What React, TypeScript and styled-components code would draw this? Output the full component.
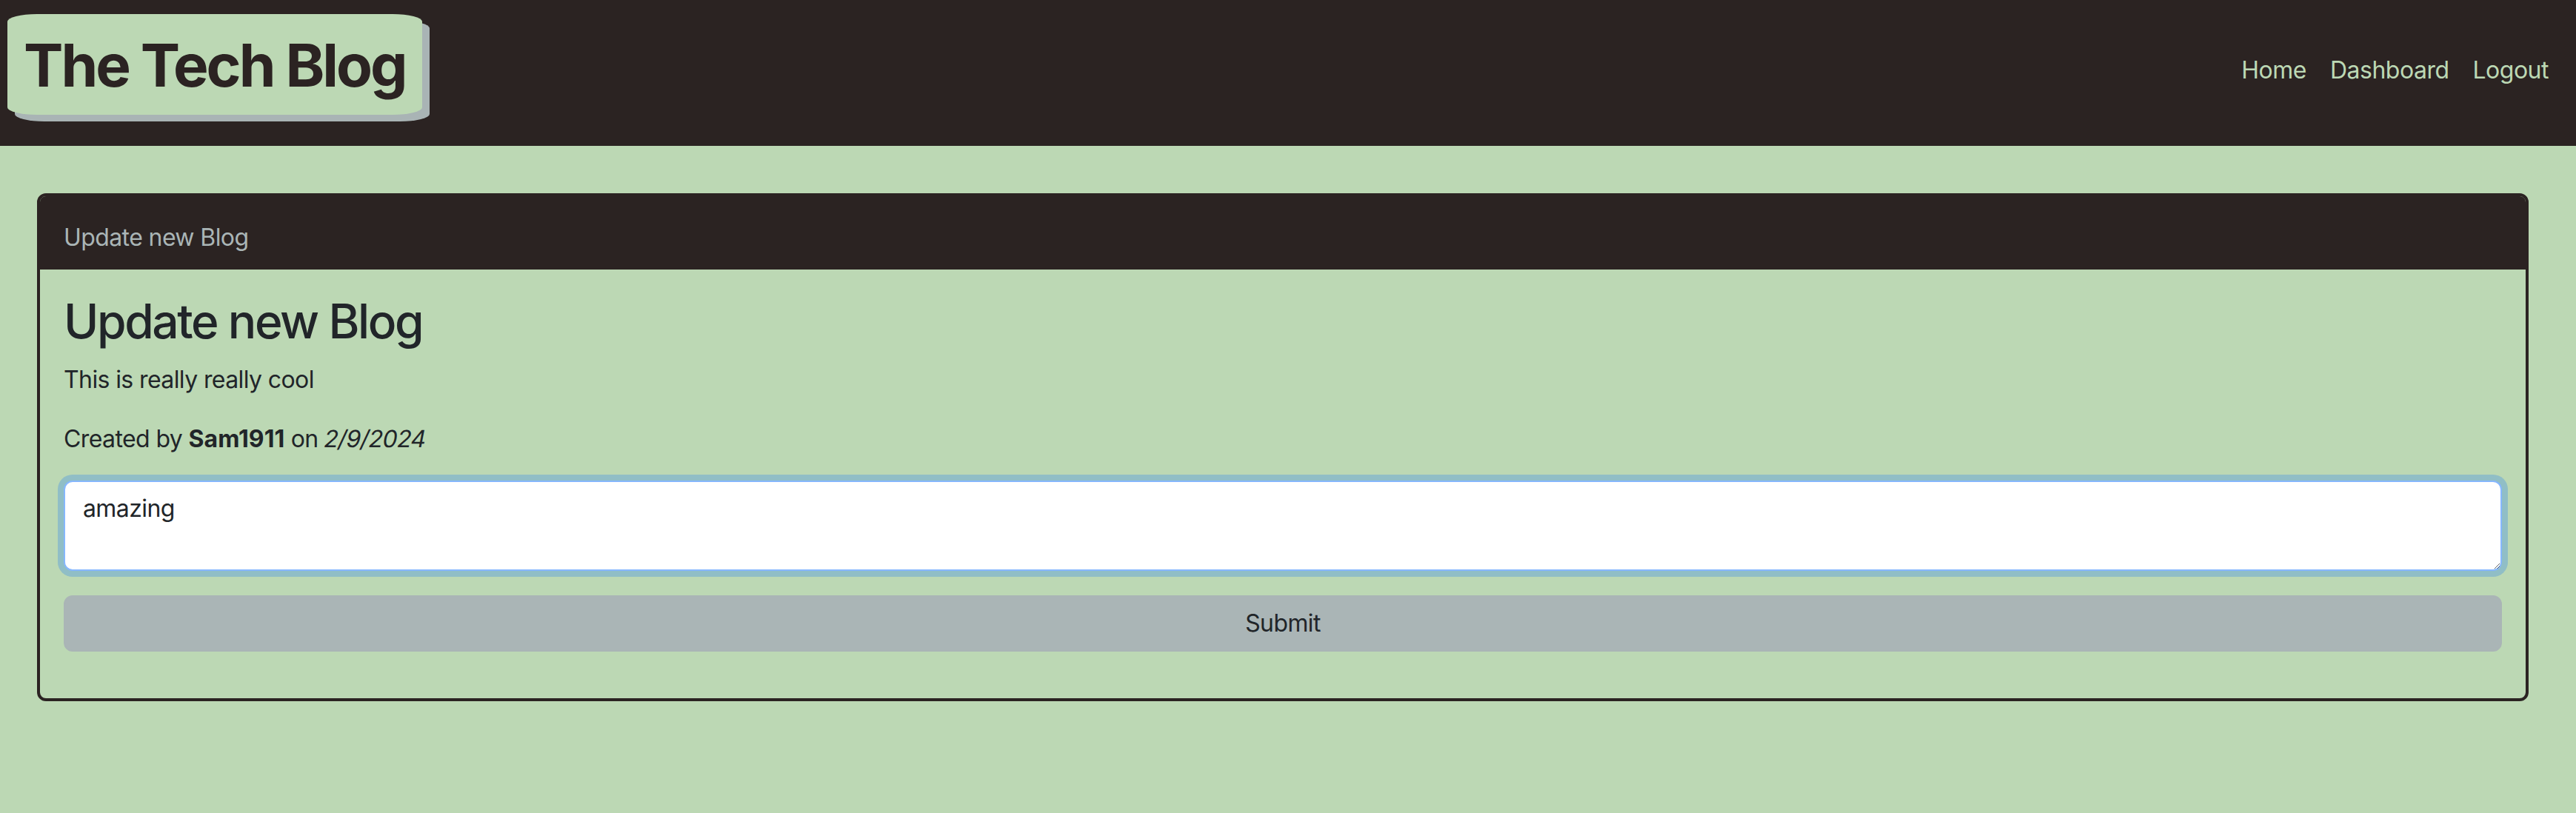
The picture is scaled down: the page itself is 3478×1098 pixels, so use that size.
import React from "react";
import styled, { createGlobalStyle } from "styled-components";

const GlobalStyle = createGlobalStyle`
  html, body {
    margin: 0;
    padding: 0;
    background: #bcd8b4;
  }
  body {
    font-family: Inter, "Noto Sans", "Liberation Sans", sans-serif;
    font-size: 32px;
    line-height: 1.5;
    letter-spacing: -0.6px;
    color: #212529;
    min-height: 1098px;
  }
  *, *::before, *::after { box-sizing: border-box; }
`;

const Page = styled.div`
  min-height: 1098px;
  background: #bcd8b4;
`;

const TopBar = styled.header`
  height: 197px;
  background: #2b2322;
  display: flex;
  justify-content: space-between;
  align-items: flex-start;
  padding: 0 21px 0 10px;
`;

const Logo = styled.h1`
  margin: 19px 0 0 0;
  padding: 21px 22px 19px 22px;
  background: #bcd8b4;
  color: #2b2322;
  font-family: Inter, "Liberation Sans", sans-serif;
  font-size: 80px;
  font-weight: 700;
  line-height: 1.2;
  letter-spacing: -3px;
  border-radius: 40px / 10px;
  box-shadow: 10px 9px 0 #a9b4b5;
  white-space: nowrap;
`;

const Nav = styled.nav`
  display: flex;
  margin-top: 71px;
`;

const NavLink = styled.a`
  color: #bcd8b4;
  text-decoration: none;
  font-size: 32px;
  line-height: 48px;
  letter-spacing: -0.5px;
  padding: 0 16px;
`;

const Card = styled.section`
  margin: 64px 64px 0 50px;
  border: 4px solid #2b2322;
  border-radius: 12px;
  overflow: hidden;
`;

const CardHeader = styled.div`
  background: #2b2322;
  color: #aab5b6;
  padding: 32px 32px 19px 32px;
  font-size: 32px;
  line-height: 48px;
`;

const CardBody = styled.div`
  padding: 32px 32px 32px 32px;
`;

const Title = styled.h2`
  margin: 0 0 16px 0;
  font-size: 64px;
  font-weight: 500;
  line-height: 1.2;
  letter-spacing: -2.4px;
  color: #212529;
`;

const Text = styled.p`
  margin: 0 0 32px 0;
  font-size: 32px;
  line-height: 48px;
`;

const Author = styled.b`
  font-weight: 700;
  letter-spacing: 0;
`;

const DateText = styled.i`
  display: inline-block;
  font-style: normal;
  letter-spacing: -0.6px;
  transform: skewX(-11deg);
`;

const Form = styled.form`
  display: flex;
  flex-direction: column;
`;

const TextArea = styled.textarea`
  display: block;
  width: 100%;
  height: 122px;
  padding: 12px 24px;
  font-family: inherit;
  font-size: 32px;
  line-height: 48px;
  letter-spacing: -0.6px;
  color: #212529;
  background: #fff;
  border: 2px solid #86b7fe;
  border-radius: 12px;
  box-shadow: 0 0 0 8px rgba(13, 110, 253, 0.25);
  outline: none;
  margin: 0 0 33px 0;
`;

const SubmitButton = styled.button`
  display: block;
  width: 100%;
  height: 76px;
  padding: 12px 24px;
  font-family: inherit;
  font-size: 32px;
  line-height: 48px;
  letter-spacing: -0.6px;
  color: #212529;
  background: #aab5b6;
  border: 2px solid #aab5b6;
  border-radius: 12px;
  margin: 0 0 31px 0;
  cursor: pointer;
`;

export default function App() {
  return (
    <Page>
      <GlobalStyle />
      <TopBar>
        <Logo>The Tech Blog</Logo>
        <Nav>
          <NavLink href="#">Home</NavLink>
          <NavLink href="#">Dashboard</NavLink>
          <NavLink href="#">Logout</NavLink>
        </Nav>
      </TopBar>
      <Card>
        <CardHeader>Update new Blog</CardHeader>
        <CardBody>
          <Title>Update new Blog</Title>
          <Text>This is really really cool</Text>
          <Text>
            Created by <Author>Sam1911</Author> on <DateText>2/9/2024</DateText>
          </Text>
          <Form onSubmit={(e) => e.preventDefault()}>
            <TextArea defaultValue="amazing" rows={2} />
            <SubmitButton type="submit">Submit</SubmitButton>
          </Form>
        </CardBody>
      </Card>
    </Page>
  );
}
